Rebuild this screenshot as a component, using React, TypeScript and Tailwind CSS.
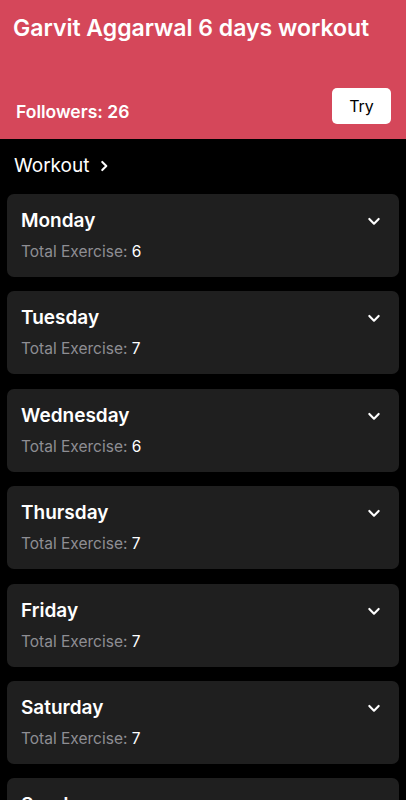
import React from 'react';

const days = [
  { name: 'Monday', count: 6 },
  { name: 'Tuesday', count: 7 },
  { name: 'Wednesday', count: 6 },
  { name: 'Thursday', count: 7 },
  { name: 'Friday', count: 7 },
  { name: 'Saturday', count: 7 },
  { name: 'Sunday', count: 6 },
];

const ChevronDown = () => (
  <svg width="16" height="16" viewBox="0 0 24 24" fill="none" stroke="white" strokeWidth="3.2" strokeLinecap="round" strokeLinejoin="round">
    <path d="M5 9l7 7 7-7" />
  </svg>
);

const ChevronRight = () => (
  <svg width="14" height="14" viewBox="0 0 24 24" fill="none" stroke="white" strokeWidth="3.5" strokeLinecap="round" strokeLinejoin="round">
    <path d="M9 5l7 7-7 7" />
  </svg>
);

const App: React.FC = () => {
  return (
    <div className="min-h-screen bg-black text-white font-['Inter',sans-serif]">
      {/* Header */}
      <div className="bg-[#d5475a] h-[139px] flex flex-col justify-between pt-[14px] pb-[14px]">
        <h1 className="px-[13px] text-[23px] leading-[28px] font-semibold">Garvit Aggarwal 6 days workout</h1>
        <div className="flex items-center justify-between pl-[16px] pr-[15px]">
          <span className="text-[17.5px] font-semibold mt-[11px]">Followers: 26</span>
          <button className="w-[59px] h-[36px] bg-white text-black text-[16px] rounded-[5px]">Try</button>
        </div>
      </div>

      {/* Workout link */}
      <div className="flex items-center gap-[8px] px-[14px] pt-[14px] pb-[15px]">
        <span className="text-[19px] leading-[26px]">Workout</span>
        <ChevronRight />
      </div>

      {/* Day cards */}
      <div className="flex flex-col gap-[14.4px] px-[7px]">
        {days.map((d) => (
          <div key={d.name} className="bg-[#1f1f1f] rounded-[7px] pl-[14px] pr-[17px] pt-[13px] pb-[13px]">
            <div className="flex items-center justify-between">
              <span className="text-[19px] leading-[28px] font-semibold">{d.name}</span>
              <ChevronDown />
            </div>
            <div className="mt-[5px] text-[15.5px] leading-[24px]">
              <span className="text-[#8e8e93]">Total Exercise: </span>
              <span className="text-white">{d.count}</span>
            </div>
          </div>
        ))}
      </div>
    </div>
  );
};

export default App;
